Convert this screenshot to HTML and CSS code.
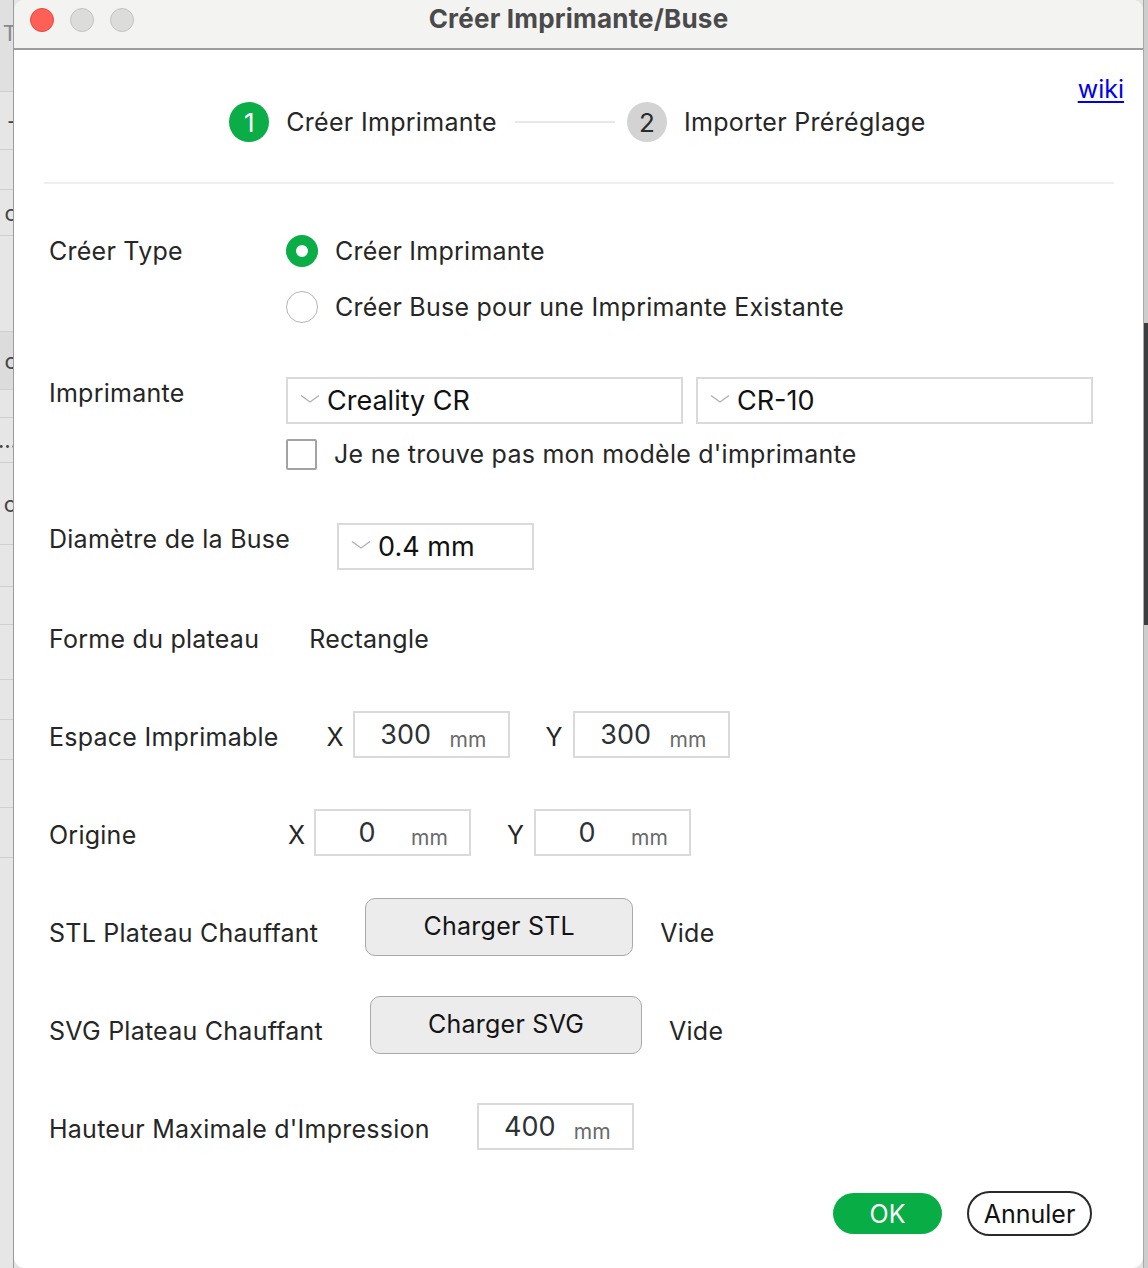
FILE: index.html
```html
<!DOCTYPE html>
<html lang="fr">
<head>
<meta charset="utf-8">
<title>Créer Imprimante/Buse</title>
<link rel="stylesheet" href="styles.css">
</head>
<body>
<div class="screen">
  <div class="bg-left">
    <div class="cell c1"><span>T</span></div>
    <div class="cell c3"><span>-</span></div>
    <div class="cell c4"></div>
    <div class="cell c5"><span>c</span></div>
    <div class="cell c6"></div>
    <div class="cell c7 dark"><span>c</span></div>
    <div class="cell c8"></div>
    <div class="cell c9"><span>…</span></div>
    <div class="cell c10"><span>o</span></div>
    <div class="cell c11"></div>
    <div class="cell c12"></div>
    <div class="cell c13"></div>
    <div class="cell c14"></div>
    <div class="cell c15"></div>
    <div class="cell c16"></div>
    <div class="cell c17"></div>
    <div class="cell c18"></div>
  </div>

  <div class="dialog">
    <div class="titlebar">
      <div class="lights">
        <span class="light red"></span>
        <span class="light gray"></span>
        <span class="light gray"></span>
      </div>
      <div class="title">Créer Imprimante/Buse</div>
    </div>

    <div class="content">
      <div class="header">
        <div class="wiki-row"><a class="wiki" href="#">wiki</a></div>
        <div class="stepper">
          <span class="step-num active">1</span>
          <span class="step-text">Créer Imprimante</span>
          <span class="step-line"></span>
          <span class="step-num idle">2</span>
          <span class="step-text">Importer Préréglage</span>
        </div>
      </div>
      <div class="separator"></div>

      <div class="form">
        <div class="row row-type">
          <div class="lbl">Créer Type</div>
          <div class="options">
            <div class="option"><span class="radio on"></span><span>Créer Imprimante</span></div>
            <div class="option"><span class="radio"></span><span>Créer Buse pour une Imprimante Existante</span></div>
          </div>
        </div>

        <div class="row row-printer">
          <div class="lbl">Imprimante</div>
          <div class="printer-col">
            <div class="selects">
              <div class="select wide">
                <svg class="chev" width="20" height="10" viewBox="0 0 20 10"><polyline points="1,1.5 10,8 19,1.5" fill="none" stroke="#b0b0b0" stroke-width="1.4"/></svg>
                <span>Creality CR</span>
              </div>
              <div class="select wide">
                <svg class="chev" width="20" height="10" viewBox="0 0 20 10"><polyline points="1,1.5 10,8 19,1.5" fill="none" stroke="#b0b0b0" stroke-width="1.4"/></svg>
                <span>CR-10</span>
              </div>
            </div>
            <div class="option check-row"><span class="checkbox"></span><span>Je ne trouve pas mon modèle d'imprimante</span></div>
          </div>
        </div>

        <div class="row row-nozzle">
          <div class="lbl">Diamètre de la Buse</div>
          <div class="select small">
            <svg class="chev" width="20" height="10" viewBox="0 0 20 10"><polyline points="1,1.5 10,8 19,1.5" fill="none" stroke="#b0b0b0" stroke-width="1.4"/></svg>
            <span>0.4 mm</span>
          </div>
        </div>

        <div class="row row-shape">
          <div class="lbl">Forme du plateau</div>
          <div class="value-text">Rectangle</div>
        </div>

        <div class="row row-area">
          <div class="lbl">Espace Imprimable</div>
          <div class="axis">X</div>
          <div class="numbox"><span class="num">300</span><span class="unit">mm</span></div>
          <div class="axis axis-y">Y</div>
          <div class="numbox"><span class="num">300</span><span class="unit">mm</span></div>
        </div>

        <div class="row row-origin">
          <div class="lbl">Origine</div>
          <div class="axis">X</div>
          <div class="numbox"><span class="num">0</span><span class="unit">mm</span></div>
          <div class="axis axis-y">Y</div>
          <div class="numbox"><span class="num">0</span><span class="unit">mm</span></div>
        </div>

        <div class="row row-btn row-stl">
          <div class="lbl">STL Plateau Chauffant</div>
          <button class="load-btn">Charger STL</button>
          <div class="vide">Vide</div>
        </div>

        <div class="row row-btn row-svg">
          <div class="lbl">SVG Plateau Chauffant</div>
          <button class="load-btn svg">Charger SVG</button>
          <div class="vide">Vide</div>
        </div>

        <div class="row row-height">
          <div class="lbl">Hauteur Maximale d'Impression</div>
          <div class="numbox"><span class="num">400</span><span class="unit">mm</span></div>
        </div>
      </div>

      <div class="footer">
        <button class="btn-ok">OK</button>
        <button class="btn-cancel">Annuler</button>
      </div>
    </div>
  </div>

  <div class="bg-right">
    <div class="r1"></div>
    <div class="r2"></div>
    <div class="r3"></div>
  </div>
</div>
</body>
</html>
```

FILE: styles.css
```css
* { box-sizing: border-box; }

html, body {
  margin: 0;
  padding: 0;
  width: 1148px;
  height: 1268px;
  overflow: hidden;
  background: #e4e4e4;
  font-family: Inter, "Noto Sans", "DejaVu Sans", sans-serif;
  color: #262626;
}

.screen {
  display: flex;
  width: 1148px;
  height: 1268px;
}

/* background app, left edge */
.bg-left {
  width: 14px;
  flex: none;
  display: flex;
  flex-direction: column;
  background: #e6e6e6;
  border-right: 1px solid #9c9c9c;
  overflow: hidden;
}
.cell {
  display: flex;
  align-items: center;
  justify-content: flex-end;
  border-bottom: 1px solid #cfcfcf;
  font-size: 22px;
  color: #444;
  overflow: hidden;
  white-space: nowrap;
}
.cell span { margin-right: -4px; }
.c1 { height: 92px; background: #e0e0e0; color: #888; align-items: flex-start; padding-top: 20px; }
.c3 { height: 58px; }
.c4 { height: 40px; }
.c5 { height: 46px; }
.c6 { height: 96px; }
.c7 { height: 58px; }
.c7.dark { background: #dcdcdc; }
.c8 { height: 28px; }
.c9 { height: 45px; }
.c10 { height: 82px; }
.c11 { height: 42px; }
.c12 { height: 38px; }
.c13 { height: 55px; }
.c14 { height: 40px; }
.c15 { height: 40px; }
.c16 { height: 48px; }
.c17 { height: 50px; }
.c18 { height: 400px; border-bottom: none; }

.bg-right {
  width: 5px;
  flex: none;
  display: flex;
  flex-direction: column;
  background: #cdcdcd;
  border-left: 1px solid #a9a9a9;
}
.r1 { height: 323px; }
.r2 { height: 302px; background: #3b3e40; }
.r3 { flex: 1; }

/* dialog */
.dialog {
  width: 1129px;
  flex: none;
  height: 1268px;
  background: #ffffff;
  border-radius: 11px;
  overflow: hidden;
  display: flex;
  flex-direction: column;
}

.titlebar {
  height: 50px;
  flex: none;
  background: #f3f3f2;
  border-bottom: 2px solid #9d9d9d;
  display: flex;
  align-items: center;
  position: relative;
}
.lights {
  display: flex;
  gap: 16px;
  padding-left: 16px;
  padding-bottom: 8px;
}
.light {
  width: 24px;
  height: 24px;
  border-radius: 50%;
  display: block;
}
.light.red { background: #fe5f57; border: 1px solid #e3493f; }
.light.gray { background: #dcdcdb; border: 1px solid #c3c3c2; }
.title {
  position: absolute;
  left: 0;
  right: 0;
  top: 3px;
  text-align: center;
  font-weight: 700;
  font-size: 26px;
  color: #4a4a4a;
  pointer-events: none;
  letter-spacing: 0.2px;
}

.content {
  flex: 1;
  display: flex;
  flex-direction: column;
}

.header {
  height: 132px;
  padding-top: 24px;
}
.wiki-row {
  display: flex;
  justify-content: flex-end;
  padding-right: 19px;
  height: 30px;
  line-height: 30px;
}
.wiki {
  color: #0000ee;
  font-size: 25px;
  text-decoration: underline;
  text-underline-offset: 3px;
}
.stepper {
  display: flex;
  align-items: center;
  justify-content: center;
  margin-top: -2px;
  padding-left: 2px;
  padding-right: 4px;
  height: 40px;
}
.step-num {
  width: 40px;
  height: 40px;
  border-radius: 50%;
  display: flex;
  align-items: center;
  justify-content: center;
  font-size: 26px;
  flex: none;
}
.step-num.active { background: #0aad46; color: #fff; }
.step-num.idle { background: #d3d3d3; color: #2a2a2a; }
.step-text {
  font-size: 25px;
  letter-spacing: 0.3px;
  margin-left: 17px;
  color: #262626;
}
.step-line {
  width: 100px;
  height: 2px;
  background: #e8e8e8;
  margin: 0 12px 0 18px;
}

.separator {
  height: 2px;
  background: #efefef;
  margin: 0 29px 0 30px;
}

.form {
  padding-left: 35px;
  padding-top: 51px;
  display: flex;
  flex-direction: column;
}

.row {
  display: flex;
  align-items: flex-start;
}
.lbl {
  min-width: 189px;
  margin-right: 48px;
  font-size: 25px;
  letter-spacing: 0.25px;
  line-height: 32px;
  white-space: nowrap;
  color: #262626;
}

.options {
  display: flex;
  flex-direction: column;
  gap: 24px;
}
.option {
  display: flex;
  align-items: center;
  height: 32px;
  font-size: 25px;
  letter-spacing: 0.25px;
  gap: 17px;
  white-space: nowrap;
}
.radio {
  width: 32px;
  height: 32px;
  border-radius: 50%;
  border: 1.5px solid #b5b5b5;
  background: #fff;
  flex: none;
  display: block;
}
.radio.on {
  border: 10.5px solid #0aad46;
  background: #fff;
}

.row-printer { margin-top: 54px; }
.printer-col {
  display: flex;
  flex-direction: column;
  gap: 14px;
}
.selects {
  display: flex;
  gap: 13px;
}
.select {
  height: 47px;
  border: 2px solid #dadada;
  display: flex;
  align-items: center;
  font-size: 27px;
  color: #111;
  padding-left: 12px;
  gap: 7px;
}
.select.wide { width: 397px; }
.select.small { width: 197px; }
.chev { margin-top: -4px; flex: none; }
.checkbox {
  width: 31px;
  height: 31px;
  border: 2px solid #a3a3a3;
  border-radius: 2px;
  flex: none;
  display: block;
}

.row-nozzle { margin-top: 53px; }
.row-nozzle .lbl { margin-right: 47px; }

.row-shape { margin-top: 53px; }
.value-text { font-size: 25px; letter-spacing: 0.25px; line-height: 32px; margin-left: 2px; }

.row-area, .row-origin, .row-height {
  align-items: center;
  height: 47px;
}
.row-area { margin-top: 56px; }
.row-origin { margin-top: 51px; }
.row-area .lbl, .row-origin .lbl, .row-height .lbl { padding-top: 5px; }

.axis {
  font-size: 25px;
  padding-top: 5px;
  width: 26px;
  flex: none;
}
.axis.axis-y { margin-left: 36px; width: 27px; }
.row-origin .lbl + .axis { margin-left: 2px; }

.numbox {
  width: 157px;
  height: 47px;
  border: 2px solid #dadada;
  display: flex;
  align-items: center;
  padding-left: 7px;
  flex: none;
}
.num {
  width: 88px;
  text-align: center;
  font-size: 27px;
  color: #2d3236;
}
.unit {
  font-size: 21px;
  color: #6a6a6a;
  margin-top: 9px;
  margin-left: 0;
}

.row-btn {
  align-items: center;
  height: 58px;
}
.row-stl { margin-top: 42px; }
.row-svg { margin-top: 40px; }
.row-btn .lbl, .row-btn .vide { margin-top: 12px; }
.row-btn .lbl { margin-right: 47px; }

.load-btn {
  height: 58px;
  width: 268px;
  border: 1.5px solid #a9a9a9;
  border-radius: 10px;
  background: #ececec;
  font-family: Inter, "Noto Sans", sans-serif;
  font-size: 25px;
  letter-spacing: 0.25px;
  color: #141414;
  padding: 0 0 2px 0;
  flex: none;
}
.load-btn.svg { width: 272px; }
.vide {
  font-size: 25px;
  letter-spacing: 0.25px;
  line-height: 32px;
  margin-left: 27px;
}

.row-height { margin-top: 49px; }
.row-height .lbl { margin-right: 47px; }

.footer {
  display: flex;
  justify-content: flex-end;
  align-items: center;
  gap: 25px;
  padding-right: 51px;
  margin-top: 41px;
}
.btn-ok {
  width: 109px;
  height: 41px;
  border: none;
  border-radius: 21px;
  background: #09ad45;
  color: #fff;
  font-family: Inter, "Noto Sans", sans-serif;
  font-size: 25px;
  padding: 0;
}
.btn-cancel {
  width: 125px;
  height: 45px;
  border: 2px solid #2a2a2a;
  border-radius: 23px;
  background: #fff;
  color: #111;
  font-family: Inter, "Noto Sans", sans-serif;
  font-size: 25px;
  padding: 0;
}
```
